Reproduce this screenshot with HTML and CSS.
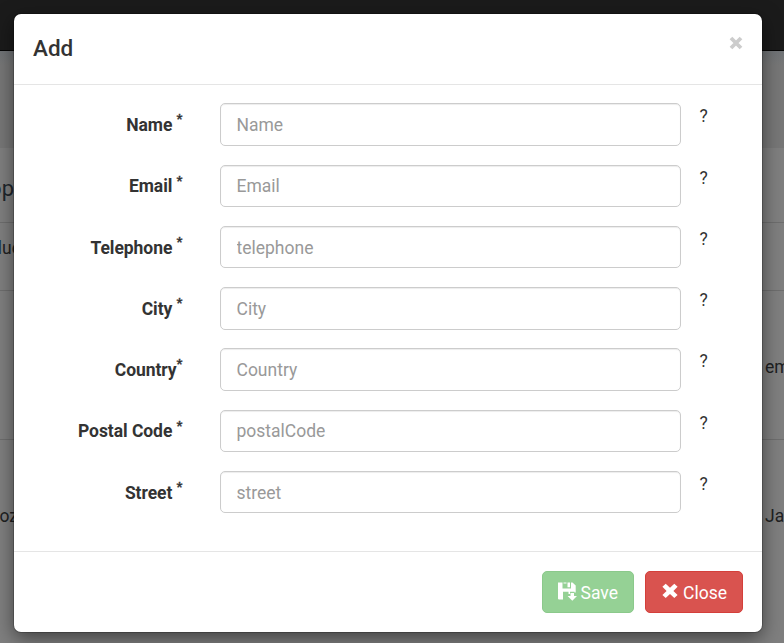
FILE: index.html
```
<!DOCTYPE html>
<html lang="en">
<head>
<meta charset="utf-8">
<title>Add</title>
<link rel="stylesheet" href="styles.css">
</head>
<body>
<div class="page">
  <div class="navbar"></div>
  <div class="banner"></div>
  <div class="row heading"><span class="start">op</span></div>
  <div class="row short"><span class="start"><span class="link">l</span>ue</span></div>
  <div class="row"><span class="start"></span><span class="end">em</span></div>
  <div class="row last"><span class="start">oz</span><span class="end">Ja</span></div>
</div>
<div class="modal">
  <div class="modal-header">
    <h4>Add</h4>
    <button class="dismiss" aria-label="Dismiss"><svg viewBox="0 0 14 14" width="14" height="14"><path d="M2 2 12 12M12 2 2 12"/></svg></button>
  </div>
  <form class="modal-body">
    <div class="field"><label for="name">Name <sup>*</sup></label><input id="name" placeholder="Name"><span class="help">?</span></div>
    <div class="field"><label for="email">Email <sup>*</sup></label><input id="email" placeholder="Email"><span class="help">?</span></div>
    <div class="field"><label for="telephone">Telephone <sup>*</sup></label><input id="telephone" placeholder="telephone"><span class="help">?</span></div>
    <div class="field"><label for="city">City <sup>*</sup></label><input id="city" placeholder="City"><span class="help">?</span></div>
    <div class="field"><label for="country">Country<sup>*</sup></label><input id="country" placeholder="Country"><span class="help">?</span></div>
    <div class="field"><label for="postal">Postal Code <sup>*</sup></label><input id="postal" placeholder="postalCode"><span class="help">?</span></div>
    <div class="field"><label for="street">Street <sup>*</sup></label><input id="street" placeholder="street"><span class="help">?</span></div>
  </form>
  <div class="modal-footer">
    <button class="btn save"><svg viewBox="0 0 19 19" width="19" height="19"><path d="M0 .5H4.5V6.5H13V.5H14.5L17.7 3.5V10.5H16.5V9.8H12V12H10.5V9.8H5V17.5H.7L0 16.8ZM9.5 .5H12V5.2H9.5ZM5.5 .5H8.5V1.5H5.5ZM12.5 11H16V14H19L14.3 18.7L9.6 14H12.5Z"/></svg>Save</button>
    <button class="btn close"><svg viewBox="0 0 16 16" width="16" height="16"><path d="M3.7.8 8 4.8 12.3.8 15.6 3.8 11.4 7.9 15.6 12 12.3 15 8 11 3.7 15 .4 12 4.6 7.9.4 3.8Z"/></svg>Close</button>
  </div>
</div>
</body>
</html>
```
FILE: styles.css
```
* { box-sizing: border-box; }
body {
  margin: 0;
  height: 643px;
  overflow: hidden;
  position: relative;
  background: #7f7f7f;
  color: #333;
  font: 17.5px/25px Roboto, sans-serif;
}
.page { color: #202122; }
.navbar { height: 51px; background: #1b1b1b; border-bottom: 1px solid #040404; }
.banner { height: 97px; background: linear-gradient(#707376, #777 14px); }
.row {
  display: flex;
  justify-content: space-between;
  align-items: center;
  height: 149px;
  padding-top: 5px;
  border-bottom: 1px solid #6e6e6e;
}
.row.short { height: 68px; align-items: flex-start; padding-top: 13px; }
.row.heading { height: 75px; padding-top: 7px; font-size: 22px; color: #20262c; }
.row.last { height: 204px; border: 0; align-items: flex-start; padding-top: 64px; }
.start { width: 18px; display: flex; justify-content: flex-end; }
.short .start { width: 21px; }
.heading .start { width: 14px; }
.end { width: 19px; }
.link { color: #19354d; }
.modal {
  position: absolute;
  top: 14px;
  left: 14px;
  width: 748px;
  height: 618px;
  background: #fff;
  border-radius: 7px;
  box-shadow: 0 0 0 1px rgba(0, 0, 0, .2), 0 6px 19px rgba(0, 0, 0, .5);
}
.modal-header {
  display: flex;
  justify-content: space-between;
  height: 71px;
  padding: 18px 19px;
  border-bottom: 1px solid #e5e5e5;
}
h4 { margin: 0; font-size: 22.5px; line-height: 32px; font-weight: 500; }
button { font: inherit; border: 0; }
.dismiss { display: block; height: 14px; width: 14px; padding: 0; margin: 4px 0 0; background: none; }
.dismiss svg { display: block; fill: none; stroke: #ccc; stroke-width: 3.8; }
.modal-body { height: 466px; padding-top: 18.3px; }
.field {
  display: grid;
  grid-template-columns: 168px 461px 30px;
  column-gap: 38px;
  height: 42.5px;
  margin-bottom: 18.75px;
}
label { text-align: right; font-weight: 700; padding-top: 9.9px; margin-right: -.5px; white-space: nowrap; letter-spacing: -.06px; }
sup { position: relative; top: -7.9px; font-size: 13.125px; line-height: 0; vertical-align: baseline; -webkit-text-stroke: .3px #333; }
input {
  width: 461px;
  height: 42.5px;
  padding: 8px 15.5px 7px;
  font: inherit;
  color: #555;
  border: 1px solid #ccc;
  border-radius: 5px;
  box-shadow: inset 0 1px 1px rgba(0, 0, 0, .075);
}
input::placeholder { color: #999; opacity: 1; }
.help { margin-left: -19.5px; padding-top: 1px; }
.modal-footer {
  display: flex;
  justify-content: flex-end;
  gap: 11px;
  padding: 19px;
  border-top: 1px solid #e5e5e5;
}
.btn {
  display: flex;
  align-items: center;
  height: 42px;
  padding: 2px 15px 0;
  border-radius: 5px;
  color: #fff;
  white-space: nowrap;
}
.btn svg { fill: #fff; flex: none; }
.save { width: 92px; background: #95d195; border: 1px solid #8bc98b; }
.save svg { margin: -4px 3.5px 0 0; }
.close { width: 98px; background: #d9534f; border: 1px solid #d43f3a; }
.close svg { margin: -5px 5px 0 1px; }
```
